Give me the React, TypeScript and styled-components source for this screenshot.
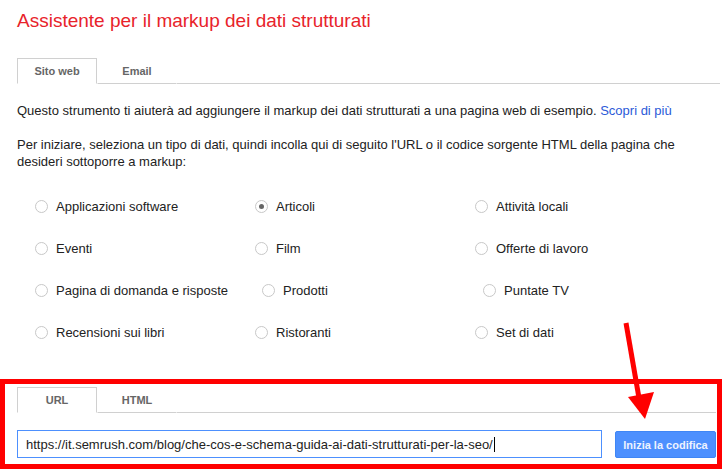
import React from "react";
import styled, { createGlobalStyle } from "styled-components";

const GlobalStyle = createGlobalStyle`
  html, body {
    margin: 0;
    padding: 0;
    background: #fff;
  }
  body {
    font-family: "Liberation Sans", Arial, sans-serif;
    color: #222;
  }
`;

const Page = styled.div`
  position: relative;
  width: 727px;
  height: 472px;
  overflow: hidden;
  padding-top: 9px;
  box-sizing: border-box;
`;

const Content = styled.div`
  padding: 0 7px 0 17px;
`;

const Title = styled.h1`
  margin: 0;
  font-size: 19px;
  line-height: 23px;
  font-weight: normal;
  color: #e8232b;
`;

const TabBar = styled.div<{ $top: number }>`
  display: flex;
  margin-top: ${(p) => p.$top}px;
  height: 26px;
`;

const Tab = styled.div<{ $active?: boolean }>`
  width: 80px;
  box-sizing: border-box;
  display: flex;
  align-items: center;
  justify-content: center;
  font-size: 11px;
  font-weight: bold;
  color: #666;
  border: 1px solid ${(p) => (p.$active ? "#d0d0d0" : "transparent")};
  border-bottom: 1px solid ${(p) => (p.$active ? "transparent" : "#d0d0d0")};
`;

const TabFill = styled.div`
  flex: 1;
  border-bottom: 1px solid #d0d0d0;
`;

const Paragraph = styled.p<{ $top: number }>`
  margin: ${(p) => p.$top}px 0 0;
  font-size: 13px;
  line-height: 17px;
`;

const Link = styled.a`
  color: #2b5ad8;
  text-decoration: none;
`;

const RadioGrid = styled.div`
  display: grid;
  grid-template-columns: 220px 220px 220px;
  grid-auto-rows: 42px;
  margin-top: 15px;
  padding-left: 18px;
`;

const RadioItem = styled.label<{ $shift?: number }>`
  display: flex;
  align-items: center;
  gap: 8px;
  padding-left: ${(p) => p.$shift ?? 0}px;
  font-size: 13px;
  color: #222;
`;

const RadioCircle = styled.span<{ $checked?: boolean }>`
  width: 13px;
  height: 13px;
  box-sizing: border-box;
  border-radius: 50%;
  border: 1px solid #c8c8c8;
  background: #fff;
  display: flex;
  align-items: center;
  justify-content: center;
  flex-shrink: 0;
  &::after {
    content: "";
    display: ${(p) => (p.$checked ? "block" : "none")};
    width: 5px;
    height: 5px;
    border-radius: 50%;
    background: #666;
  }
`;

const Highlight = styled.div`
  margin-top: 26px;
  width: 722px;
  height: 90px;
  box-sizing: border-box;
  border: 5px solid #ff0000;
  padding: 3px 1px 0 12px;
`;

const InputRow = styled.div`
  display: flex;
  gap: 13px;
  margin-top: 17px;
`;

const UrlField = styled.div`
  width: 585px;
  height: 28px;
  box-sizing: border-box;
  border: 1px solid #4d90fe;
  padding: 0 8px;
  display: flex;
  align-items: center;
  font-size: 13px;
  color: #222;
  white-space: nowrap;
  overflow: hidden;
`;

const Caret = styled.span`
  display: inline-block;
  width: 1px;
  height: 15px;
  background: #000;
  margin-left: 1px;
`;

const StartButton = styled.button`
  width: 101px;
  height: 27px;
  margin-top: 1px;
  box-sizing: border-box;
  border: 1px solid #3f86f5;
  border-radius: 2px;
  background: #4d90fe;
  color: #eef3ff;
  font-family: "Liberation Sans", Arial, sans-serif;
  font-size: 11px;
  font-weight: bold;
  padding: 0;
`;

const ArrowOverlay = styled.svg`
  position: absolute;
  left: 0;
  top: 0;
  pointer-events: none;
`;

type Option = { label: string; checked?: boolean; shift?: number };

const options: Option[] = [
  { label: "Applicazioni software" },
  { label: "Articoli", checked: true },
  { label: "Attività locali" },
  { label: "Eventi" },
  { label: "Film" },
  { label: "Offerte di lavoro" },
  { label: "Pagina di domanda e risposte" },
  { label: "Prodotti", shift: 7 },
  { label: "Puntate TV", shift: 8 },
  { label: "Recensioni sui libri" },
  { label: "Ristoranti" },
  { label: "Set di dati" },
];

const App: React.FC = () => {
  return (
    <Page>
      <GlobalStyle />
      <Content>
        <Title>Assistente per il markup dei dati strutturati</Title>
        <TabBar $top={26}>
          <Tab $active>Sito web</Tab>
          <Tab>Email</Tab>
          <TabFill />
        </TabBar>
        <Paragraph $top={18}>
          Questo strumento ti aiuterà ad aggiungere il markup dei dati strutturati a una pagina web di
          esempio. <Link href="#">Scopri di più</Link>
        </Paragraph>
        <Paragraph $top={17}>
          Per iniziare, seleziona un tipo di dati, quindi incolla qui di seguito l'URL o il codice
          sorgente HTML della pagina che desideri sottoporre a markup:
        </Paragraph>
        <RadioGrid>
          {options.map((o) => (
            <RadioItem key={o.label} $shift={o.shift}>
              <RadioCircle $checked={o.checked} />
              {o.label}
            </RadioItem>
          ))}
        </RadioGrid>
      </Content>
      <Highlight>
        <TabBar $top={0}>
          <Tab $active>URL</Tab>
          <Tab>HTML</Tab>
          <TabFill />
        </TabBar>
        <InputRow>
          <UrlField>
            https://it.semrush.com/blog/che-cos-e-schema-guida-ai-dati-strutturati-per-la-seo/
            <Caret />
          </UrlField>
          <StartButton>Inizia la codifica</StartButton>
        </InputRow>
      </Highlight>
      <ArrowOverlay width="727" height="472" viewBox="0 0 727 472">
        <line x1="626" y1="323" x2="639" y2="398" stroke="#ff0000" strokeWidth="5" />
        <polygon points="628,397 654,392 645,419" fill="#ff0000" />
      </ArrowOverlay>
    </Page>
  );
};

export default App;
